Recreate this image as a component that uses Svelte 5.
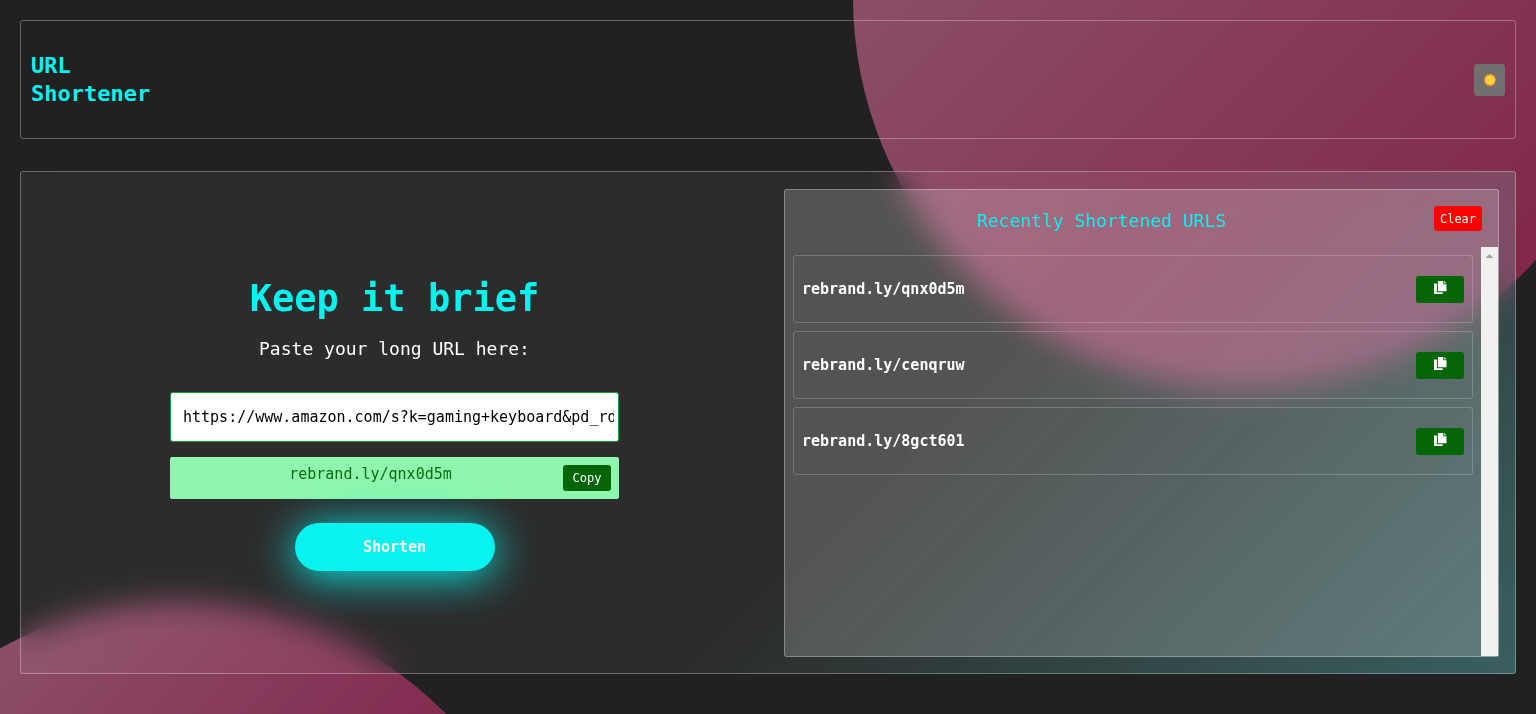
<script>
  let longUrl = $state('https://www.amazon.com/s?k=gaming+keyboard&pd_rd_');
  let current = $state('rebrand.ly/qnx0d5m');
  let recent = $state(['rebrand.ly/qnx0d5m', 'rebrand.ly/cenqruw', 'rebrand.ly/8gct601']);

  function copy(text) {
    navigator.clipboard?.writeText(text);
  }
</script>

<div class="page">
  <div class="circle circle-top"></div>
  <div class="circle circle-bottom"></div>

  <header class="topbar">
    <h2 class="brand">URL Shortener</h2>
    <button class="theme" type="button" aria-label="Toggle theme">
      <svg viewBox="0 0 14 14" width="14" height="14" aria-hidden="true">
        <path fill="#f98a26" d="M7 .4L8.3 1.5L10 1L10.6 2.7L12.4 3.3L12.2 5.2L13.6 7L12.2 8.8L12.4 10.7L10.6 11.3L10 13L8.3 12.5L7 13.6L5.7 12.5L4 13L3.4 11.3L1.6 10.7L1.8 8.8L.4 7L1.8 5.2L1.6 3.3L3.4 2.7L4 1L5.7 1.5z" />
        <circle cx="7" cy="7" r="4.8" fill="#ffd43b" />
      </svg>
    </button>
  </header>

  <main class="card">
    <form class="shortener" onsubmit={(e) => e.preventDefault()}>
      <h1>Keep it brief</h1>
      <label for="long-url">Paste your long URL here:</label>
      <input id="long-url" type="text" bind:value={longUrl} />
      <div class="result">
        <a href="https://{current}">{current}</a>
        <button class="copy" type="button" onclick={() => copy(current)}>Copy</button>
      </div>
      <button class="submit" type="submit">Shorten</button>
    </form>

    <section class="recent">
      <div class="recent-head">
        <h3>Recently Shortened URLS</h3>
        <button class="clear" type="button" onclick={() => (recent = [])}>Clear</button>
      </div>
      <div class="recent-body">
        <ul>
          {#each recent as url}
            <li>
              <a href="https://{url}">{url}</a>
              <button class="copy icon" type="button" aria-label="Copy {url}" onclick={() => copy(url)}>
                <svg viewBox="0 0 13 13" width="13" height="13" aria-hidden="true">
                  <path fill="#fff" d="M4.5 0H9.3V3.2H12.5V9.7Q12.5 10.3 11.9 10.3H4.5Q3.9 10.3 3.9 9.7V.6Q3.9 0 4.5 0zM10.2 0L12.5 2.3H10.2z" />
                  <path fill="#fff" d="M.6 2.5H2.9V11.3H8.7V12.4Q8.7 13 8.1 13H.6Q0 13 0 12.4V3.1Q0 2.5 .6 2.5z" />
                </svg>
              </button>
            </li>
          {/each}
        </ul>
        <div class="scrollbar" aria-hidden="true"></div>
      </div>
    </section>
  </main>
</div>

<style>
  :global(body) {
    background: #212121;
  }

  .page {
    --cyan: #08f2ef;
    --line: rgba(255, 255, 255, 0.3);
    position: relative;
    display: flex;
    flex-direction: column;
    gap: 32px;
    box-sizing: border-box;
    min-height: 100vh;
    padding: 20px 20px 40px;
    overflow: hidden;
    background: #212121;
    color: #fff;
    font-family: Consolas, 'DejaVu Sans Mono', monospace;
    font-size: 15px;
  }

  .page *,
  .page *::before {
    box-sizing: border-box;
  }

  h1,
  h2,
  h3,
  ul {
    margin: 0;
    padding: 0;
  }

  button {
    padding: 0;
    border: 0;
    border-radius: 3px;
    color: #fff;
    font-family: inherit;
    cursor: pointer;
  }

  a {
    color: inherit;
    text-decoration: none;
  }

  .circle {
    position: absolute;
    border-radius: 50%;
  }

  .circle-top {
    top: -395px;
    right: -101px;
    width: 784px;
    height: 784px;
    background: linear-gradient(135deg, #8f5e73, #7f1e43);
  }

  .circle-bottom {
    top: 602px;
    left: -192px;
    width: 744px;
    height: 744px;
    background: linear-gradient(135deg, #8f5e73, #81224a 60%);
  }

  .topbar {
    position: relative;
    display: flex;
    align-items: center;
    justify-content: space-between;
    min-height: 119px;
    padding: 11px 10px 10px;
    border: 1px solid var(--line);
    border-radius: 3px;
  }

  .brand {
    width: min-content;
    color: var(--cyan);
    font-size: 22px;
    line-height: 28px;
  }

  .theme {
    display: grid;
    place-items: center;
    width: 31px;
    height: 32px;
    background: #707070;
  }

  .card {
    position: relative;
    display: grid;
    flex: 1;
    grid-template-columns: 1fr 1fr;
    gap: 32px;
    padding: 17px 16px 16px;
    border: 1px solid var(--line);
    border-radius: 3px;
    background: linear-gradient(135deg, rgba(255, 255, 255, 0.05) 58%, rgba(96, 191, 191, 0.4)) border-box;
    backdrop-filter: blur(15px);
  }

  .shortener {
    display: flex;
    flex-direction: column;
    align-items: center;
    justify-content: center;
  }

  h1 {
    margin-bottom: 16px;
    color: var(--cyan);
    font-size: 37px;
    line-height: 47px;
  }

  label {
    margin-bottom: 32px;
    font-size: 18px;
    line-height: 22px;
  }

  input {
    width: 100%;
    max-width: 449px;
    height: 50px;
    margin-bottom: 15px;
    padding: 0 4px 0 12px;
    border: 1px solid #14a03a;
    border-radius: 3px;
    background: #fff;
    color: #000;
    font-family: inherit;
    font-size: 15px;
  }

  .result {
    display: flex;
    align-items: flex-start;
    width: 100%;
    max-width: 449px;
    margin-bottom: 24px;
    padding: 8px;
    border-radius: 2px;
    background: #90f6ad;
    color: #067010;
  }

  .result a {
    flex: 1;
    line-height: 18px;
    text-align: center;
  }

  .copy {
    width: 48px;
    height: 26px;
    background: #056608;
    font-size: 12px;
  }

  .submit {
    width: 200px;
    height: 48px;
    border-radius: 24px;
    background: var(--cyan);
    box-shadow: 0 5px 44px var(--cyan);
    font-size: 15px;
    font-weight: bold;
  }

  .recent {
    display: flex;
    flex-direction: column;
    border: 1px solid var(--line);
    border-radius: 3px;
    background: rgba(255, 255, 255, 0.19);
  }

  .recent-head {
    display: flex;
    align-items: flex-start;
    gap: 32px;
    height: 57px;
    padding: 16px;
  }

  h3 {
    flex: 1;
    color: var(--cyan);
    font-size: 18px;
    font-weight: normal;
    line-height: 30px;
    text-align: center;
  }

  .clear {
    width: 48px;
    height: 25px;
    background: #f00;
    font-size: 12px;
  }

  .recent-body {
    display: flex;
    flex: 1;
  }

  ul {
    display: flex;
    flex: 1;
    flex-direction: column;
    gap: 8px;
    padding: 8px;
    list-style: none;
  }

  li {
    display: flex;
    align-items: center;
    justify-content: space-between;
    min-height: 68px;
    padding: 8px;
    border: 1px solid rgba(255, 255, 255, 0.2);
    border-radius: 3px;
    font-weight: bold;
  }

  .icon {
    display: flex;
    justify-content: center;
    height: 27px;
    padding-top: 5px;
  }

  .scrollbar {
    width: 17px;
    padding-top: 7px;
    background: #f1f1f1;
  }

  .scrollbar::before {
    content: '';
    display: block;
    width: 8px;
    height: 4px;
    margin: 0 auto;
    background: #a3a3a3;
    clip-path: polygon(50% 0, 100% 100%, 0 100%);
  }
</style>
